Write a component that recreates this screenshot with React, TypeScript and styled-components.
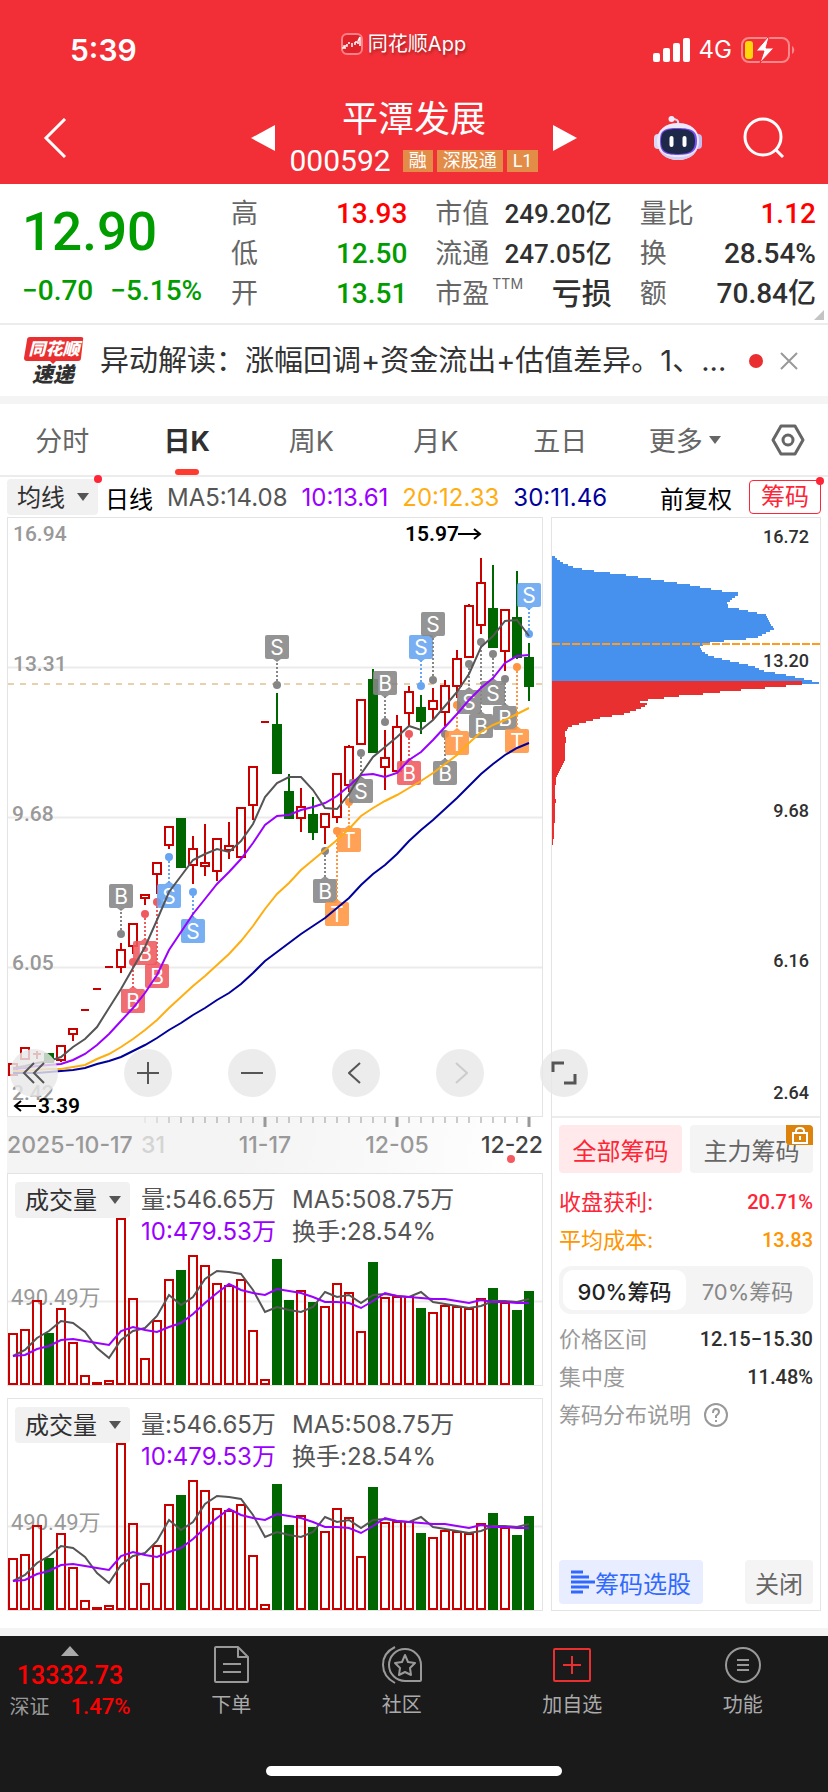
import React from "react";
import styled, { createGlobalStyle, css } from "styled-components";

const UI = `Inter, "Noto Sans CJK SC", sans-serif`;
const NUM = `Roboto, "Noto Sans CJK SC", sans-serif`;

const GlobalStyle = createGlobalStyle`
  * { box-sizing: border-box; }
  body { margin: 0; background: #fff; font-family: ${UI}; color: #333; }
  button, select { font-family: inherit; margin: 0; padding: 0; border: 0; background: none; color: inherit; }
  a { color: inherit; text-decoration: none; }
  svg { display: block; }
`;

/* ---------- data ---------- */

type Candle = ["r" | "g", number, number, number, number];

// colour, high, body top, body bottom, low
const candles: Candle[] = [
  ["r", 1402, 1402, 1432, 1432], ["r", 1362, 1362, 1390, 1390], ["r", 1369, 1377, 1380, 1390],
  ["g", 1376, 1378, 1398, 1398], ["r", 1356, 1357, 1394, 1398], ["r", 1315, 1315, 1326, 1344],
  ["r", 1267, 1267, 1269, 1269], ["r", 1214, 1214, 1216, 1216], ["r", 1157, 1157, 1159, 1159],
  ["r", 1095, 1115, 1157, 1172], ["r", 1047, 1048, 1105, 1124], ["r", 973, 975, 983, 1000],
  ["r", 891, 892, 920, 972], ["r", 801, 802, 848, 857], ["g", 782, 782, 903, 903],
  ["r", 824, 857, 898, 946], ["r", 795, 893, 901, 926], ["r", 831, 832, 913, 938],
  ["r", 789, 849, 860, 882], ["r", 753, 754, 879, 879], ["r", 649, 650, 746, 784],
  ["r", 536, 536, 538, 538], ["g", 463, 543, 664, 664], ["g", 668, 712, 778, 778],
  ["r", 702, 751, 780, 815], ["g", 726, 771, 815, 836], ["r", 767, 768, 803, 845],
  ["r", 666, 667, 776, 792], ["r", 593, 600, 695, 712], ["r", 480, 480, 592, 592],
  ["g", 402, 428, 612, 612], ["r", 556, 628, 649, 708], ["r", 517, 547, 660, 660],
  ["r", 443, 460, 513, 545], ["g", 467, 500, 534, 567], ["r", 450, 483, 503, 530],
  ["r", 430, 444, 510, 545], ["r", 352, 375, 443, 475], ["r", 235, 240, 370, 370],
  ["r", 119, 182, 289, 313], ["g", 137, 248, 345, 345], ["r", 248, 251, 355, 406],
  ["g", 152, 272, 370, 376], ["g", 334, 374, 443, 481],
];

const averages: { color: string; points: number[] }[] = [
  { color: "#00009c", points: [1427, 1426, 1425, 1424, 1422, 1418, 1412, 1404, 1395, 1385, 1370, 1356, 1338, 1317, 1298, 1280, 1261, 1241, 1222, 1199, 1173, 1143, 1118, 1097, 1074, 1054, 1032, 1008, 981, 949, 922, 897, 870, 838, 810, 783, 756, 728, 698, 667, 643, 619, 602, 590] },
  { color: "#ffae12", points: [1422, 1421, 1419, 1417, 1415, 1411, 1405, 1391, 1377, 1360, 1340, 1318, 1292, 1260, 1234, 1206, 1180, 1151, 1123, 1090, 1052, 1009, 973, 943, 912, 886, 860, 836, 807, 775, 753, 736, 720, 703, 684, 665, 642, 618, 590, 561, 544, 530, 516, 499] },
  { color: "#9a00ff", points: [1417, 1413, 1409, 1405, 1402, 1393, 1377, 1355, 1327, 1295, 1260, 1222, 1177, 1113, 1068, 1022, 985, 947, 917, 882, 842, 797, 774, 771, 758, 752, 740, 722, 698, 671, 667, 675, 664, 633, 611, 580, 547, 515, 480, 450, 424, 386, 368, 366] },
  { color: "#555", points: [1412, 1408, 1400, 1395, 1385, 1361, 1340, 1308, 1262, 1213, 1160, 1106, 1038, 966, 926, 886, 870, 858, 866, 838, 795, 725, 690, 676, 676, 708, 753, 755, 718, 668, 625, 598, 573, 546, 555, 530, 494, 460, 415, 345, 318, 279, 278, 318] },
];

const tagColors = { gray: "#868686", red: "#ef5a5f", blue: "#66a5f2", orange: "#ff9540" };

// day, marker height, tag height, letter, colour
const tags: [number, number, number, string, keyof typeof tagColors][] = [
  [9, 1074, 976, "B", "gray"], [10, 1144, 1243, "B", "red"], [11, 1023, 1121, "B", "red"],
  [12, 993, 1180, "B", "red"], [13, 878, 976, "S", "blue"], [15, 967, 1066, "S", "blue"],
  [22, 441, 344, "S", "gray"], [26, 864, 963, "B", "gray"], [27, 811, 1022, "T", "orange"],
  [28, 738, 835, "T", "orange"], [29, 613, 711, "S", "gray"], [31, 536, 437, "B", "gray"],
  [33, 567, 665, "B", "red"], [34, 445, 346, "S", "blue"], [35, 430, 288, "S", "gray"],
  [36, 566, 665, "B", "gray"], [37, 492, 590, "T", "orange"], [38, 389, 486, "S", "gray"],
  [40, 363, 461, "S", "gray"], [39, 333, 546, "B", "gray"], [41, 427, 525, "B", "gray"],
  [42, 396, 583, "T", "orange"], [43, 311, 213, "S", "blue"],
];

const volumes = [670, 657, 570, 670, 594, 697, 797, 817, 810, 326, 564, 746, 632, 507, 480, 437, 467, 519, 527, 507, 660, 808, 447, 570, 542, 577, 589, 521, 547, 663, 458, 562, 560, 560, 594, 607, 587, 589, 594, 564, 535, 577, 600, 544];
const volumeMa5 = [738, 720, 686, 665, 634, 639, 668, 716, 744, 692, 665, 655, 618, 557, 587, 563, 507, 484, 488, 493, 540, 606, 593, 601, 608, 592, 548, 562, 557, 581, 557, 553, 560, 561, 548, 578, 584, 590, 595, 589, 575, 573, 576, 568];
const volumeMa10 = [740, 737, 719, 710, 692, 688, 693, 700, 706, 663, 653, 660, 667, 651, 639, 614, 580, 551, 522, 542, 550, 555, 538, 545, 550, 563, 577, 577, 579, 594, 574, 550, 560, 561, 565, 568, 568, 574, 579, 570, 576, 576, 581, 580];

const chipsAbove: [number, number][] = [[37, 109], [57, 122], [62, 128], [108, 143], [162, 149], [258, 160], [354, 173], [450, 185], [498, 194], [546, 201], [594, 206], [594, 211], [562, 232], [566, 242], [612, 250], [678, 261], [702, 298], [654, 318], [620, 323], [520, 330], [478, 341], [487, 352], [510, 366], [570, 377], [640, 390], [672, 403], [740, 413], [780, 422], [816, 428], [837, 432], [837, 438]];
const chipsBelow: [number, number][] = [[786, 432], [786, 440], [738, 441], [645, 450], [565, 454], [489, 462], [417, 466], [350, 474], [300, 479], [300, 482], [321, 484], [321, 490], [297, 500], [252, 512], [180, 524], [129, 536], [88, 545], [75, 562], [81, 580], [75, 592], [75, 630], [51, 670], [45, 705], [48, 730], [45, 765], [44, 812], [39, 847]];

const dayX = (i: number) => 5 + i * 12;
const priceY = (v: number) => Math.round(((v - 18) * 598) / 1517);
const volumeY = (v: number) => Math.round((v - 190) / 3) - 1;
const line = (values: number[], y: (v: number) => number) =>
  values.map((v, i) => `${dayX(i)},${y(v)}`).join(" ");

function steps(points: [number, number][]) {
  const rows = points.map(([x, y]) => [(x - 37) / 3, priceY(y)]);
  const first = rows[0][1];
  const last = rows[rows.length - 1][1];
  let d = `M0 ${first}`;
  for (let y = first; y < last; y += 2) {
    const k = Math.max(0, rows.findIndex((r) => r[1] > y) - 1);
    const [x0, y0] = rows[k];
    const [x1, y1] = rows[k + 1];
    const x = Math.round(y1 === y0 ? x1 : x0 + ((x1 - x0) * (y - y0)) / (y1 - y0));
    d += `H${x}V${Math.min(y + 2, last)}`;
  }
  return d + "H0Z";
}

/* ---------- header ---------- */

const Header = styled.header`
  height: 184px;
  background: #f22f37;
  color: #fff;
  overflow: hidden;
`;
const StatusBar = styled.div`
  display: grid;
  grid-template-columns: 1fr auto 1fr;
  align-items: center;
  height: 88px;
  padding: 12px 33px 0 70px;
`;
const Clock = styled.span`
  font-size: 30px;
  line-height: 36px;
  font-weight: 600;
`;
const AppLabel = styled.span`
  display: flex;
  align-items: center;
  gap: 5px;
  margin: -12px 58px 0 0;
  font-size: 20px;
  line-height: 28px;
  text-shadow: 1px 2px 3px rgba(0, 0, 0, 0.35);
`;
const Signals = styled.span`
  display: flex;
  align-items: center;
  justify-content: flex-end;
  gap: 9px;
  font-size: 24px;
  line-height: 28px;
`;
const TitleBar = styled.div`
  display: grid;
  grid-template-columns: 1fr auto 1fr;
  align-items: center;
  height: 96px;
  padding: 4px 43px 0;
`;
const IconButton = styled.button`
  display: flex;
  align-items: center;
  justify-content: center;
`;
const TitleGroup = styled.div`
  display: flex;
  align-items: center;
  gap: 15px;
`;
const TitleText = styled.div`
  display: flex;
  flex-direction: column;
  align-items: center;
  padding-top: 2px;
`;
const StockName = styled.h1`
  margin: 0;
  font-size: 36px;
  line-height: 44px;
  font-weight: 400;
`;
const CodeLine = styled.div`
  display: flex;
  align-items: center;
  gap: 4px;
  font-family: ${NUM};
`;
const Code = styled.span`
  margin-right: 8px;
  font-size: 30px;
  line-height: 40px;
`;
const Badge = styled.span`
  padding: 0 6px;
  font-size: 18px;
  line-height: 22px;
  background: #e28c48;
`;
const HeaderActions = styled.div`
  display: flex;
  align-items: center;
  justify-content: flex-end;
  gap: 41px;
`;

/* ---------- quote ---------- */

const Quote = styled.section`
  position: relative;
  display: grid;
  grid-template-columns: 203px repeat(3, 1fr);
  column-gap: 28px;
  height: 141px;
  padding: 10px 12px 0 0;
  border-bottom: 2px solid #ececec;
`;
const PriceBlock = styled.div`
  display: flex;
  flex-direction: column;
  padding-left: 22px;
  white-space: nowrap;
  color: #009c00;
  font-family: ${NUM};
  font-weight: 500;
`;
const Price = styled.strong`
  font-size: 53px;
  line-height: 76px;
  font-weight: 500;
`;
const Changes = styled.div`
  display: flex;
  gap: 17px;
  font-size: 28px;
  line-height: 42px;
`;
const Facts = styled.dl`
  margin: 0;
`;
const Fact = styled.div`
  display: flex;
  justify-content: space-between;
  height: 40px;
  white-space: nowrap;
`;
const FactLabel = styled.dt`
  font-size: 27px;
  line-height: 40px;
  color: #666;
  sup {
    margin-left: 3px;
    font-size: 14px;
    line-height: 16px;
    vertical-align: 14px;
  }
`;
const factSizes = { small: 26, normal: 28, large: 30 };
const FactValue = styled.dd<{ $color?: string; $size: keyof typeof factSizes }>`
  margin: 0;
  font-family: ${NUM};
  font-size: ${(p) => factSizes[p.$size]}px;
  line-height: 40px;
  font-weight: 500;
  color: ${(p) => p.$color ?? "#303030"};
`;
const Corner = styled.span`
  position: absolute;
  right: 4px;
  bottom: 3px;
  border: 5px solid transparent;
  border-right-color: #c4c4c4;
  border-bottom-color: #c4c4c4;
`;

/* ---------- news and tabs ---------- */

const News = styled.section`
  display: flex;
  align-items: center;
  height: 79px;
  padding: 0 30px 0 24px;
  border-bottom: 8px solid #f4f4f4;
`;
const Headline = styled.a`
  flex: 1;
  min-width: 0;
  margin-left: 16px;
  overflow: hidden;
  white-space: nowrap;
  font-size: 29px;
  line-height: 40px;
`;
const Dot = styled.span`
  width: 14px;
  height: 14px;
  margin-right: 17px;
  border-radius: 50%;
  background: #ea2f30;
`;
const Tabs = styled.nav`
  display: flex;
  height: 73px;
  border-bottom: 2px solid #ececec;
`;
const Tab = styled.button<{ $active?: boolean }>`
  position: relative;
  flex: 1;
  display: flex;
  align-items: center;
  justify-content: center;
  gap: 6px;
  font-size: 27px;
  color: #666;
  ${(p) =>
    p.$active &&
    css`
      color: #303030;
      font-weight: 700;
      &::after {
        content: "";
        position: absolute;
        bottom: 0;
        width: 24px;
        height: 6px;
        border-radius: 3px;
        background: #ff3b30;
      }
    `}
`;
const TabSettings = styled(IconButton)`
  width: 81px;
`;

/* ---------- indicator bar ---------- */

const IndicatorBar = styled.div`
  display: flex;
  align-items: center;
  height: 40px;
  padding: 0 7px;
  font-size: 24px;
  white-space: nowrap;
`;
const DropBox = styled.span<{ $width: number }>`
  position: relative;
  width: ${(p) => p.$width}px;
  height: 36px;
  svg {
    position: absolute;
    right: 9px;
    top: 13px;
    pointer-events: none;
  }
`;
const Drop = styled.select`
  width: 100%;
  height: 36px;
  padding: 0 10px;
  appearance: none;
  border-radius: 4px;
  background: #f1f1f1;
  font-size: 24px;
  color: #303030;
`;
const AlertDot = styled.i`
  position: absolute;
  top: -4px;
  right: -4px;
  width: 8px;
  height: 8px;
  border-radius: 50%;
  background: #ff2436;
`;
const Period = styled.span`
  margin: 0 14px 0 7px;
  color: #000;
`;
const Average = styled.span<{ $color: string }>`
  margin-right: 14px;
  color: ${(p) => p.$color};
`;
const Adjust = styled.button`
  margin: 0 17px 0 auto;
  font-size: 24px;
  color: #000;
`;
const ChipsToggle = styled.button`
  position: relative;
  width: 72px;
  height: 34px;
  border: 1px solid #ff2436;
  border-radius: 4px;
  font-size: 24px;
  line-height: 30px;
  color: #ff2436;
`;

/* ---------- charts ---------- */

const Workspace = styled.main`
  position: relative;
  display: grid;
  grid-template-columns: minmax(0, 1fr) 270px;
  column-gap: 8px;
  padding: 0 7px 17px;
`;
const Charts = styled.div`
  display: flex;
  flex-direction: column;
`;
const Panel = styled.section`
  position: relative;
  border: 1px solid #e4e4e4;
`;
const Drawing = styled.svg`
  width: 100%;
  height: auto;
  overflow: visible;
`;
const Axis = styled.div`
  background: linear-gradient(100deg, #f4f4f4 45%, #fff 98%);
`;
const VolumePanel = styled(Panel)`
  & + & {
    margin-top: 12px;
  }
`;
const VolumeHead = styled.div`
  position: absolute;
  top: 8px;
  left: 7px;
  display: flex;
  gap: 11px;
`;
const VolumeStats = styled.dl`
  display: grid;
  grid-template-columns: auto auto;
  column-gap: 16px;
  margin: 2px 0 0;
  font-size: 24px;
  line-height: 32px;
  color: #555;
`;
const Stat = styled.div<{ $color?: string }>`
  display: flex;
  color: ${(p) => p.$color};
  dt, dd { margin: 0; }
`;
const Controls = styled.div`
  position: absolute;
  left: 10px;
  top: 532px;
  display: flex;
  gap: 56px;
`;
const Round = styled.button<{ $first?: boolean }>`
  display: flex;
  align-items: center;
  justify-content: center;
  width: 48px;
  height: 48px;
  margin-right: ${(p) => (p.$first ? 10 : 0)}px;
  border-radius: 50%;
  background: rgba(232, 232, 232, 0.82);
`;

/* ---------- chip distribution ---------- */

const ChipPanel = styled(Panel)`
  display: flex;
  flex-direction: column;
`;
const ChipBody = styled.div`
  flex: 1;
  display: flex;
  flex-direction: column;
  padding: 7px 7px 6px;
  border-top: 2px solid #ececec;
`;
const PairRow = styled.div`
  display: grid;
  grid-template-columns: 1fr 1fr;
  gap: 8px;
  margin-bottom: 10px;
`;
const ChipTab = styled.button<{ $active?: boolean }>`
  position: relative;
  height: 48px;
  border-radius: 4px;
  font-size: 24px;
  color: ${(p) => (p.$active ? "#ff2436" : "#666")};
  background: ${(p) => (p.$active ? "#ffe9ea" : "#f4f4f4")};
`;
const LockBadge = styled.span`
  position: absolute;
  top: 0;
  right: 0;
  display: flex;
  justify-content: center;
  width: 27px;
  height: 20px;
  border-radius: 0 4px 0 4px;
  background: #dc830e;
`;
const ChipFact = styled.div<{ $color?: string }>`
  display: flex;
  justify-content: space-between;
  font-size: 22px;
  line-height: 38px;
  color: ${(p) => p.$color ?? "#999"};
`;
const ChipValue = styled.span<{ $dark?: boolean }>`
  font-family: ${NUM};
  font-size: 20px;
  font-weight: 500;
  color: ${(p) => (p.$dark ? "#303030" : "inherit")};
`;
const Segment = styled.div`
  display: grid;
  grid-template-columns: 1fr 1fr;
  height: 48px;
  margin: 7px 0 6px;
  padding: 4px;
  border-radius: 12px;
  background: #f4f4f4;
`;
const SegmentButton = styled.button<{ $active?: boolean }>`
  border-radius: 10px;
  font-size: 22px;
  font-weight: ${(p) => (p.$active ? 500 : 400)};
  color: ${(p) => (p.$active ? "#222" : "#888")};
  background: ${(p) => (p.$active ? "#fff" : "none")};
`;
const Explain = styled.a`
  display: flex;
  align-items: center;
  gap: 13px;
  font-size: 22px;
  line-height: 38px;
  color: #999;
`;
const BottomRow = styled.div`
  display: flex;
  justify-content: space-between;
  margin-top: auto;
`;
const ActionButton = styled.button<{ $primary?: boolean }>`
  display: flex;
  align-items: center;
  justify-content: center;
  width: ${(p) => (p.$primary ? 144 : 68)}px;
  height: 44px;
  border-radius: 4px;
  font-size: 24px;
  color: ${(p) => (p.$primary ? "#3169ff" : "#666")};
  background: ${(p) => (p.$primary ? "#e8edff" : "#f4f4f4")};
`;

/* ---------- bottom navigation ---------- */

const Footer = styled.footer`
  position: relative;
  display: flex;
  height: 164px;
  border-top: 8px solid #f4f4f4;
  background: #1a1a1a;
`;
const IndexBox = styled.a`
  display: flex;
  flex-direction: column;
  align-items: center;
  width: 146px;
  padding: 10px 6px 0 0;
  font-family: ${NUM};
  font-weight: 500;
  color: #f00;
`;
const IndexValue = styled.span`
  font-size: 25px;
  line-height: 40px;
`;
const IndexRow = styled.span`
  display: flex;
  gap: 21px;
  font-size: 22px;
  line-height: 22px;
`;
const IndexName = styled.span`
  font-size: 20px;
  font-weight: 400;
  color: #999;
`;
const NavItem = styled.a`
  flex: 1;
  display: flex;
  flex-direction: column;
  align-items: center;
  gap: 6px;
  padding-top: 9px;
  font-size: 20px;
  line-height: 28px;
  color: #aaa;
`;
const HomeBar = styled.span`
  position: absolute;
  left: 50%;
  bottom: 16px;
  width: 296px;
  height: 10px;
  margin-left: -148px;
  border-radius: 5px;
  background: #fff;
`;

/* ---------- drawings ---------- */

const Caret = ({ color = "#555" }: { color?: string }) => (
  <svg width="12" height="10" viewBox="0 0 12 10"><path d="M0 1h12l-6 8z" fill={color} /></svg>
);

const Robot = () => (
  <svg width="48" height="44" viewBox="0 0 48 44">
    <path d="M24 8C25 4 22 3 18 3" fill="none" stroke="#dcdaf5" strokeWidth="2" strokeLinecap="round" />
    <circle cx="17.500" cy="3" r="3" fill="#eceafb" />
    <rect x="0" y="18" width="8" height="15" rx="4" fill="#dad8f5" />
    <rect x="40" y="18" width="8" height="15" rx="4" fill="#c4bdf0" />
    <path d="M24 7C37 7 45 14 45 25S37 44 24 44 3 36 3 25 11 7 24 7z" fill="#eceafa" />
    <path d="M24 44C35 44 42 38 44 31C39 40 31 41 24 41S9 40 4 31C6 38 13 44 24 44z" fill="#d3cff2" />
    <path d="M24 12C38 12 43 15 43 25S38 39 24 39 6 36 6 25 10 12 24 12z" fill="#7a4ff0" />
    <path d="M24 13C37 13 41 16 41 25S37 38 24 38 7 35 7 25 11 13 24 13z" fill="#1e2848" />
    <path d="M17.500 22v7M30.500 22v7" stroke="#fff" strokeWidth="4" strokeLinecap="round" />
  </svg>
);

const NewsLogo = () => (
  <svg width="60" height="48" viewBox="0 0 60 48" role="img" aria-label="同花顺速递" fontStyle="italic" fontWeight="900" fontFamily={UI}>
    <path d="M6 0H57q3 0 2 3L57 21q0 3-3 3H32l-3 3-3-3H3q-3 0-3-3L3 3q0-3 3-3z" fill="#ea2f30" />
    <text x="30" y="18" fill="#fff" fontSize="17" textAnchor="middle">同花顺</text>
    <text x="29" y="45" fill="#303030" fontSize="21" textAnchor="middle">速递</text>
  </svg>
);

const PriceChart = () => (
  <Drawing viewBox="0 0 534 598" role="img" aria-label="日K线图" fontFamily="Roboto, sans-serif">
    <path d="M0 149.500H534M0 299.500H534M0 449.500H534" stroke="#ebebeb" strokeWidth="2" />
    <path d="M0 166H534" stroke="#e8cfae" strokeWidth="2" strokeDasharray="6 6" />
    <g fill="#999" fontSize="21" fontWeight="500">
      <text x="5" y="23">16.94</text>
      <text x="5" y="153">13.31</text>
      <text x="4" y="303">9.68</text>
      <text x="4" y="452">6.05</text>
      <text x="4" y="582">2.42</text>
    </g>
    {candles.map(([kind, high, top, bottom, low], i) => {
      const x = dayX(i);
      const t = priceY(top);
      const b = Math.max(priceY(bottom), t + 1);
      const c = kind === "r" ? "#c80000" : "#006600";
      return (
        <g key={i} stroke={c} strokeWidth="2" fill={kind === "r" ? "#fff" : c}>
          <path d={`M${x} ${priceY(high)}V${t}M${x} ${b}V${priceY(low)}`} />
          {b - t < 2 ? <path d={`M${x - 4} ${t}h8`} /> : <rect x={x - 4} y={t} width="8" height={b - t} />}
        </g>
      );
    })}
    {tags.map(([i, dot, at, letter, tone]) => {
      const x = dayX(i);
      const d = priceY(dot);
      const y = priceY(at);
      const c = tagColors[tone];
      const below = y > d;
      return (
        <g key={i} fill={c}>
          <path d={`M${x} ${d}V${below ? y - 13 : y + 13}`} stroke={c} strokeWidth="2" strokeDasharray="2 2" />
          <circle cx={x} cy={d} r="4" />
          <g opacity="0.88">
            <rect x={x - 12} y={y - 12} width="24" height="24" rx="2" />
            <path d={below ? `M${x - 4} ${y - 12}l4-3 4 3z` : `M${x - 4} ${y + 12}l4 3 4-3z`} />
          </g>
          <text x={x} y={y + 8} fill="#fff" fontSize="21" textAnchor="middle" fontFamily="Inter, sans-serif">{letter}</text>
        </g>
      );
    })}
    {averages.map((a) => (
      <polyline key={a.color} points={line(a.points, priceY)} fill="none" stroke={a.color} strokeWidth="2" />
    ))}
    <g fill="#000" fontSize="21" fontWeight="600">
      <text x="397" y="23">15.97</text>
      <text x="30" y="595">3.39</text>
      <path d="M450 16h22M466 11l6 5-6 5M28 588H7M13 583l-6 5 6 5" fill="none" stroke="#000" strokeWidth="2" />
    </g>
  </Drawing>
);

const DateAxis = () => (
  <Drawing viewBox="0 0 536 56" role="img" aria-label="日期轴" fontFamily="Inter, sans-serif" fontSize="23" fontWeight="500">
    {candles.map((_, i) => {
      if (i < 11) return null;
      const major = i % 11 === 10;
      return (
        <path key={i} d={`M${dayX(i) + 1} 0V${major ? 10 : 6}`} stroke="#999" strokeWidth={major ? 3 : 1} opacity={Math.min(1, (i - 10) / 4)} />
      );
    })}
    <g fill="#999">
      <text x="0" y="36">2025-10-17</text>
      <text x="134" y="36" opacity="0.35">31</text>
      <text x="258" y="36" textAnchor="middle">11-17</text>
      <text x="390" y="36" textAnchor="middle">12-05</text>
    </g>
    <text x="536" y="36" textAnchor="end" fill="#444">12-22</text>
    <circle cx="504" cy="42" r="4" fill="#f4595f" />
  </Drawing>
);

const VolumeChart = () => (
  <Drawing viewBox="0 0 534 211" role="img" aria-label="成交量图">
    <path d="M0 127.500H534" stroke="#ebebeb" strokeWidth="2" />
    <text x="3" y="131" fill="#999" fontSize="22" fontFamily={NUM}>490.49万</text>
    {volumes.map((v, i) => {
      const up = candles[i][0] === "r";
      const y = Math.min(volumeY(v) + 1, 209);
      return (
        <rect key={i} x={dayX(i) - 4} y={y} width="8" height={210 - y} strokeWidth="2"
          fill={up ? "none" : "#006600"} stroke={up ? "#c80000" : "#006600"} />
      );
    })}
    <polyline points={line(volumeMa5, volumeY)} fill="none" stroke="#555" strokeWidth="2" />
    <polyline points={line(volumeMa10, volumeY)} fill="none" stroke="#9a00ff" strokeWidth="2" />
  </Drawing>
);

const ChipChart = () => (
  <Drawing viewBox="0 0 268 598" role="img" aria-label="筹码分布图" fontFamily="Roboto, sans-serif">
    <path d={steps(chipsAbove)} fill="#4691ee" />
    <path d={steps(chipsBelow)} fill="#e83030" />
    <path d="M0 126H268" stroke="#ff9c1f" strokeWidth="2" strokeDasharray="8 2" />
    <g fill="#303030" fontSize="18" fontWeight="500" textAnchor="end">
      <text x="257" y="25">16.72</text>
      <text x="257" y="149">13.20</text>
      <text x="257" y="299">9.68</text>
      <text x="257" y="449">6.16</text>
      <text x="257" y="581">2.64</text>
    </g>
  </Drawing>
);

const VolumeSection = ({ id }: { id: string }) => (
  <VolumePanel>
    <VolumeChart />
    <VolumeHead>
      <DropBox $width={115}>
        <Drop id={id} aria-label="副图指标"><option>成交量</option></Drop>
        <Caret />
      </DropBox>
      <VolumeStats>
        <Stat><dt>量:</dt><dd>546.65万</dd></Stat>
        <Stat><dt>MA5:</dt><dd>508.75万</dd></Stat>
        <Stat $color="#9a00ff"><dt>10:</dt><dd>479.53万</dd></Stat>
        <Stat><dt>换手:</dt><dd>28.54%</dd></Stat>
      </VolumeStats>
    </VolumeHead>
  </VolumePanel>
);

const red = "#ff0000";
const green = "#009c00";
type FactData = { label: string; sup?: string; value: string; color?: string; size?: keyof typeof factSizes };
const facts: FactData[][] = [
  [{ label: "高", value: "13.93", color: red }, { label: "低", value: "12.50", color: green }, { label: "开", value: "13.51", color: green }],
  [{ label: "市值", value: "249.20亿", size: "small" }, { label: "流通", value: "247.05亿", size: "small" }, { label: "市盈", sup: "TTM", value: "亏损", size: "large" }],
  [{ label: "量比", value: "1.12", color: red }, { label: "换", value: "28.54%" }, { label: "额", value: "70.84亿" }],
];

export default function App() {
  return (
    <>
      <GlobalStyle />
      <Header>
        <StatusBar>
          <Clock>5:39</Clock>
          <AppLabel>
            <svg width="22" height="22" viewBox="0 0 22 22">
              <rect x="1" y="1" width="20" height="20" rx="5" fill="#e0222a" stroke="#ff8086" strokeWidth="2" />
              <path d="M1 15h2v-2h3v-2M7 10h2M11 10v4M14 9v3M14 9h3v2M17 8l2-4v9M1 15h4" fill="none" stroke="#fff" strokeWidth="1.500" />
            </svg>
            同花顺App
          </AppLabel>
          <Signals>
            <svg width="37" height="24" viewBox="0 0 37 24" fill="#fff">
              <rect x="0" y="15" width="7" height="9" rx="2" /><rect x="10" y="10" width="7" height="14" rx="2" />
              <rect x="20" y="5" width="7" height="19" rx="2" /><rect x="30" y="0" width="7" height="24" rx="2" />
            </svg>
            4G
            <svg width="54" height="26" viewBox="0 0 54 26">
              <rect x="1" y="1" width="47" height="24" rx="7" fill="none" stroke="#f9888c" strokeWidth="2" />
              <path d="M51 9c3 2 3 6 0 8z" fill="#f9888c" />
              <rect x="4" y="4" width="8" height="18" rx="3" fill="#ffd60a" />
              <path d="M27 0L15 14h8l-4 12 14-15h-8l3-11z" fill="#fff" stroke="#f22f37" strokeWidth="1" />
            </svg>
          </Signals>
        </StatusBar>
        <TitleBar>
          <div>
            <IconButton aria-label="返回">
              <svg width="24" height="40" viewBox="0 0 24 40"><path d="M22 1L3 20l19 19" fill="none" stroke="#fff" strokeWidth="3" /></svg>
            </IconButton>
          </div>
          <TitleGroup>
            <IconButton aria-label="上一只"><svg width="24" height="26" viewBox="0 0 24 26"><path d="M24 0v26L0 13z" fill="#fff" /></svg></IconButton>
            <TitleText>
              <StockName>平潭发展</StockName>
              <CodeLine><Code>000592</Code><Badge>融</Badge><Badge>深股通</Badge><Badge>L1</Badge></CodeLine>
            </TitleText>
            <IconButton aria-label="下一只"><svg width="24" height="26" viewBox="0 0 24 26"><path d="M0 0v26l24-13z" fill="#fff" /></svg></IconButton>
          </TitleGroup>
          <HeaderActions>
            <IconButton aria-label="智能助手"><Robot /></IconButton>
            <IconButton aria-label="搜索">
              <svg width="42" height="42" viewBox="0 0 42 42" fill="none" stroke="#fff" strokeWidth="3"><circle cx="20" cy="20" r="18" /><path d="M32 32l8 8" /></svg>
            </IconButton>
          </HeaderActions>
        </TitleBar>
      </Header>

      <Quote>
        <PriceBlock>
          <Price>12.90</Price>
          <Changes><span>−0.70</span><span>−5.15%</span></Changes>
        </PriceBlock>
        {facts.map((column, n) => (
          <Facts key={n}>
            {column.map((f) => (
              <Fact key={f.label}>
                <FactLabel>{f.label}{f.sup && <sup>{f.sup}</sup>}</FactLabel>
                <FactValue $color={f.color} $size={f.size ?? "normal"}>{f.value}</FactValue>
              </Fact>
            ))}
          </Facts>
        ))}
        <Corner />
      </Quote>

      <News>
        <NewsLogo />
        <Headline href="#">异动解读：涨幅回调+资金流出+估值差异。1、...</Headline>
        <Dot />
        <IconButton aria-label="关闭资讯">
          <svg width="18" height="18" viewBox="0 0 18 18"><path d="M1 1l16 16M17 1L1 17" stroke="#999" strokeWidth="2" /></svg>
        </IconButton>
      </News>

      <Tabs>
        <Tab>分时</Tab>
        <Tab $active>日K</Tab>
        <Tab>周K</Tab>
        <Tab>月K</Tab>
        <Tab>五日</Tab>
        <Tab>更多<Caret color="#666" /></Tab>
        <TabSettings aria-label="图表设置">
          <svg width="34" height="32" viewBox="0 0 34 32" fill="none" stroke="#666" strokeWidth="3" strokeLinejoin="round">
            <path d="M10 2h14l8 14-8 14H10L2 16z" /><circle cx="17" cy="16" r="5" />
          </svg>
        </TabSettings>
      </Tabs>

      <IndicatorBar>
        <DropBox $width={91}>
          <Drop aria-label="主图指标"><option>均线</option></Drop>
          <Caret />
          <AlertDot />
        </DropBox>
        <Period>日线</Period>
        <Average $color="#555">MA5:14.08</Average>
        <Average $color="#9a00ff">10:13.61</Average>
        <Average $color="#ffae12">20:12.33</Average>
        <Average $color="#00009c">30:11.46</Average>
        <Adjust>前复权</Adjust>
        <ChipsToggle>筹码<AlertDot /></ChipsToggle>
      </IndicatorBar>

      <Workspace>
        <Charts>
          <Panel><PriceChart /></Panel>
          <Axis><DateAxis /></Axis>
          <VolumeSection id="volume-first" />
          <VolumeSection id="volume-second" />
        </Charts>

        <ChipPanel>
          <ChipChart />
          <ChipBody>
            <PairRow>
              <ChipTab $active>全部筹码</ChipTab>
              <ChipTab>
                主力筹码
                <LockBadge>
                  <svg width="16" height="19" viewBox="0 0 16 19" fill="none" stroke="#fff" strokeWidth="2"><path d="M1 8h14v10H1zM4 8V6q0-3 4-3t4 3v2M8 11v4" /></svg>
                </LockBadge>
              </ChipTab>
            </PairRow>
            <ChipFact $color="#ff2436"><span>收盘获利:</span><ChipValue>20.71%</ChipValue></ChipFact>
            <ChipFact $color="#ff9500"><span>平均成本:</span><ChipValue>13.83</ChipValue></ChipFact>
            <Segment>
              <SegmentButton $active>90%筹码</SegmentButton>
              <SegmentButton>70%筹码</SegmentButton>
            </Segment>
            <ChipFact><span>价格区间</span><ChipValue $dark>12.15−15.30</ChipValue></ChipFact>
            <ChipFact><span>集中度</span><ChipValue $dark>11.48%</ChipValue></ChipFact>
            <Explain href="#">
              筹码分布说明
              <svg width="24" height="24" viewBox="0 0 24 24" fill="none" stroke="#999" strokeWidth="2"><circle cx="12" cy="12" r="11" /><path d="M9 10q0-4 3-4t3 3q0 2-3 4v2M12 17v2" /></svg>
            </Explain>
            <BottomRow>
              <ActionButton $primary>
                <svg width="24" height="24" viewBox="0 0 24 24" stroke="#3169ff" strokeWidth="3"><path d="M0 2h12M0 7h18M0 12h24M0 17h18M0 22h12" /></svg>
                筹码选股
              </ActionButton>
              <ActionButton>关闭</ActionButton>
            </BottomRow>
          </ChipBody>
        </ChipPanel>

        <Controls>
          <Round $first aria-label="快退"><svg width="24" height="22" viewBox="0 0 24 22" fill="none" stroke="#555" strokeWidth="2"><path d="M12 1L2 11l10 10M22 1L12 11l10 10" /></svg></Round>
          <Round aria-label="放大"><svg width="22" height="22" viewBox="0 0 22 22" stroke="#555" strokeWidth="2"><path d="M0 11h22M11 0v22" /></svg></Round>
          <Round aria-label="缩小"><svg width="22" height="22" viewBox="0 0 22 22" stroke="#555" strokeWidth="2"><path d="M0 11h22" /></svg></Round>
          <Round aria-label="向左"><svg width="16" height="22" viewBox="0 0 16 22" fill="none" stroke="#555" strokeWidth="2"><path d="M12 1L1 11l11 10" /></svg></Round>
          <Round aria-label="向右" disabled><svg width="16" height="22" viewBox="0 0 16 22" fill="none" stroke="#ccc" strokeWidth="2"><path d="M4 1l11 10L4 21" /></svg></Round>
          <Round aria-label="全屏"><svg width="26" height="26" viewBox="0 0 26 26" fill="none" stroke="#555" strokeWidth="3"><path d="M2 12V3h11M24 14v9H13" /></svg></Round>
        </Controls>
      </Workspace>

      <Footer>
        <IndexBox href="#">
          <svg width="18" height="10" viewBox="0 0 18 10"><path d="M9 0l9 10H0z" fill="#aaa" /></svg>
          <IndexValue>13332.73</IndexValue>
          <IndexRow><IndexName>深证</IndexName>1.47%</IndexRow>
        </IndexBox>
        <NavItem href="#">
          <svg width="40" height="40" viewBox="0 0 40 40" fill="none" stroke="#999" strokeWidth="2" strokeLinejoin="round"><path d="M4 3q0-1 1-1h22l10 10v24q0 1-1 1H5q-1 0-1-1zM27 2v10h10M12 19h18M12 27h18" /></svg>
          下单
        </NavItem>
        <NavItem href="#">
          <svg width="40" height="40" viewBox="0 0 40 40" fill="none" stroke="#999" strokeWidth="2" strokeLinejoin="round"><path d="M13 2C-3 10-3 29 13 38M39 20v15q0 1-1 1H23A16 16 0 1 1 39 20zM23 10l3 7 7 1-5 5 1 7-6-3-6 3 1-7-5-5 7-1z" /></svg>
          社区
        </NavItem>
        <NavItem href="#">
          <svg width="40" height="40" viewBox="0 0 40 40" fill="none" stroke="#ea2f30" strokeWidth="2"><rect x="2" y="4" width="36" height="32" rx="1" /><path d="M11 20h18M20 11v18" /></svg>
          加自选
        </NavItem>
        <NavItem href="#">
          <svg width="40" height="40" viewBox="0 0 40 40" fill="none" stroke="#999" strokeWidth="2"><circle cx="20" cy="20" r="17" /><path d="M14 15h12M14 20h12M14 25h12" /></svg>
          功能
        </NavItem>
        <HomeBar />
      </Footer>
    </>
  );
}
